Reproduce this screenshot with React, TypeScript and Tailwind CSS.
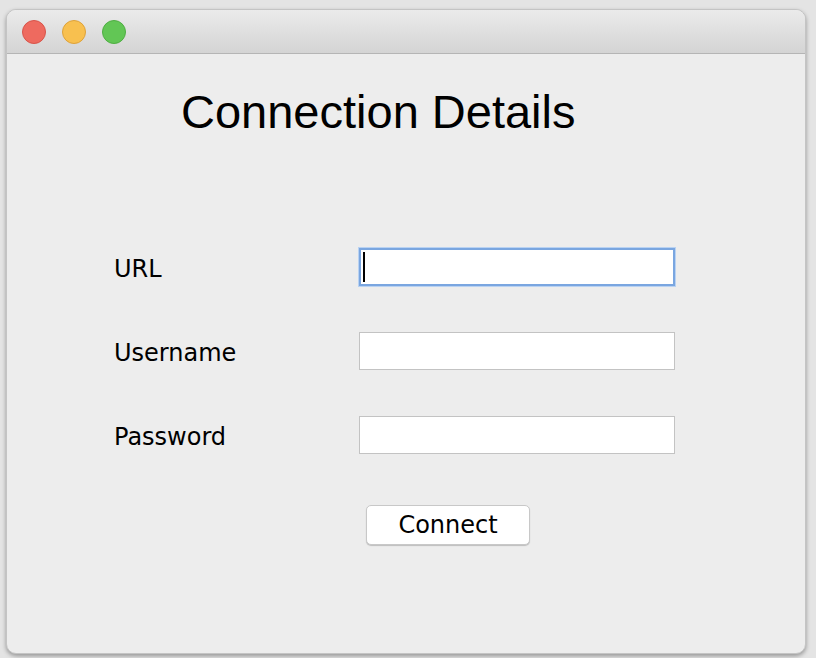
import React, { useState } from 'react';

function TrafficLight({ fill, ring }: { fill: string; ring: string }) {
  return <span className={`block w-[24px] h-[24px] rounded-full border ${fill} ${ring}`} />;
}

export default function App() {
  const [form, setForm] = useState({ url: '', username: '', password: '' });

  const field = 'w-[316px] h-[38px] bg-white px-2 text-[20px] outline-none';
  const label = 'w-[245px] pt-[3px] text-[24px] text-black';

  return (
    <div className="w-[816px] h-[658px] bg-[#e4e4e4] pt-[9px] pl-[6px] pr-[10px] pb-[4px] font-['DejaVu_Sans',sans-serif]">
      <div className="h-full flex flex-col rounded-[10px] overflow-hidden border border-[#c4c4c4] bg-[#ededed] shadow-[0_2px_4px_rgba(0,0,0,0.35)]">
        {/* Title bar */}
        <div className="h-[44px] shrink-0 flex items-center gap-[16px] pl-[15px] bg-gradient-to-b from-[#ebebeb] to-[#d4d4d4] border-b border-[#b5b5b5]">
          <TrafficLight fill="bg-[#ee6a5f]" ring="border-[#d8544a]" />
          <TrafficLight fill="bg-[#f8c04f]" ring="border-[#dea23a]" />
          <TrafficLight fill="bg-[#62c655]" ring="border-[#4fae43]" />
        </div>

        {/* Content */}
        <div className="flex-1 flex flex-col pt-[30px] pl-[107px]">
          <h1 className="ml-[67px] text-[47px] leading-[56px] text-black font-['Liberation_Sans',Arial,sans-serif]">
            Connection Details
          </h1>

          <form className="mt-[108px] flex flex-col gap-[46px]" onSubmit={(e) => e.preventDefault()}>
            <div className="flex items-center h-[38px]">
              <label className={label}>URL</label>
              <div className="relative">
                <input
                  className={`${field} border-2 border-[#7aa6e0] shadow-[0_0_0_1px_#b9d2f2]`}
                  value={form.url}
                  onChange={(e) => setForm({ ...form, url: e.target.value })}
                />
                {/* caret */}
                <span className="absolute left-[4px] top-[4px] w-[2px] h-[30px] bg-black" />
              </div>
            </div>
            <div className="flex items-center h-[38px]">
              <label className={label}>Username</label>
              <input
                className={`${field} border border-[#c3c3c3]`}
                value={form.username}
                onChange={(e) => setForm({ ...form, username: e.target.value })}
              />
            </div>
            <div className="flex items-center h-[38px]">
              <label className={label}>Password</label>
              <input
                type="password"
                className={`${field} border border-[#c3c3c3]`}
                value={form.password}
                onChange={(e) => setForm({ ...form, password: e.target.value })}
              />
            </div>

            <div className="ml-[252px] mt-[5px]">
              <button
                type="submit"
                className="w-[164px] h-[40px] bg-white rounded-[5px] border border-[#c8c8c8] shadow-[0_1px_1px_rgba(0,0,0,0.2)] text-[24px] text-black leading-none"
              >
                Connect
              </button>
            </div>
          </form>
        </div>
      </div>
    </div>
  );
}
